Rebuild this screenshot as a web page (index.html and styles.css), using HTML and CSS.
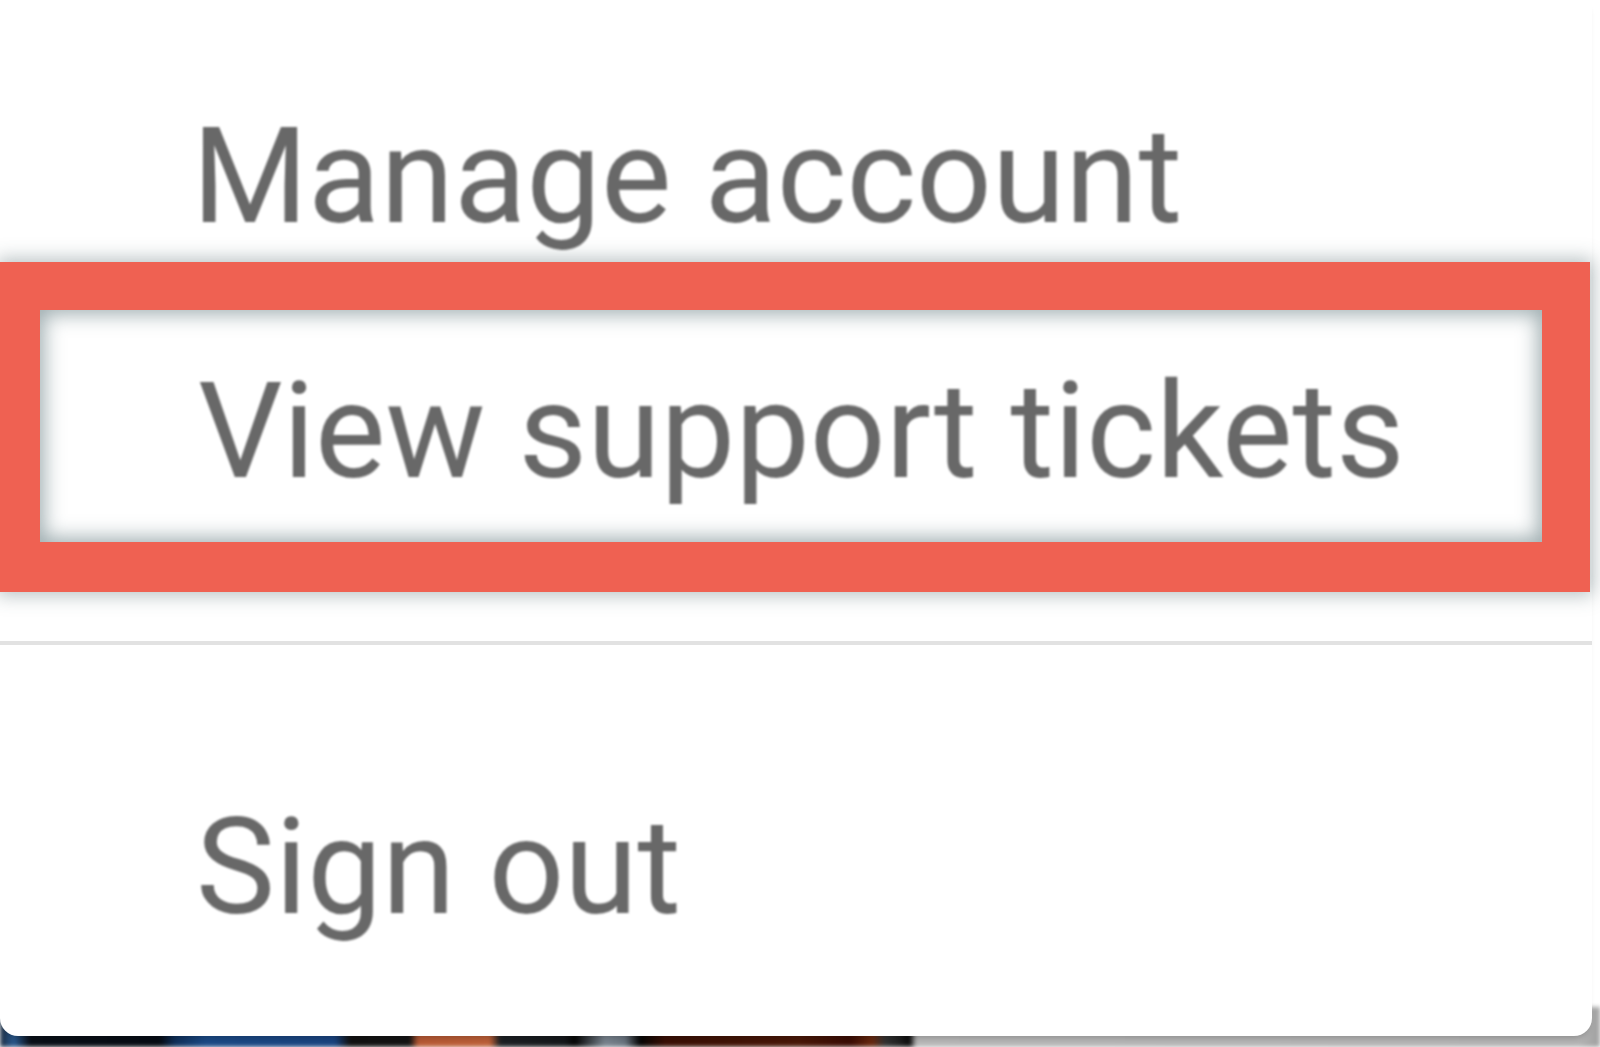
FILE: index.html
```html
<!DOCTYPE html>
<html lang="en">
<head>
<meta charset="utf-8">
<title>Account menu</title>
<link rel="stylesheet" href="styles.css">
</head>
<body>
<div class="screen">
  <div class="app">
    <div class="strip"></div>
  </div>
  <nav class="menu">
    <a class="item first">Manage account</a>
    <div class="focus-ring">
      <a class="item focused">View support tickets</a>
    </div>
    <hr class="sep">
    <a class="item last">Sign out</a>
  </nav>
</div>
</body>
</html>
```

FILE: styles.css
```css
* { box-sizing: border-box; }
html, body { margin: 0; padding: 0; background: #ffffff; }
.screen {
  position: relative;
  width: 1600px;
  height: 1047px;
  overflow: hidden;
  background: #ffffff;
  font-family: Roboto, "Liberation Sans", sans-serif;
}
.app {
  height: 1047px;
  display: flex;
  flex-direction: column;
  justify-content: flex-end;
}
.strip {
  height: 40px;
  filter: blur(2px);
  background: linear-gradient(to right,
    #1c2c40 0px, #2a5a90 14px, #0a1018 30px, #060c14 160px,
    #10305a 175px, #1b4a86 205px, #1a4480 335px, #121212 350px,
    #141414 410px, #b85a35 418px, #bd6038 490px, #1c2024 500px,
    #15181b 565px, #050505 575px, #7a8590 605px, #6a7580 625px,
    #050505 640px, #3a1005 665px, #4a1808 800px, #3a0c04 850px,
    #6a2a10 872px, #333333 885px, #202020 900px, #0a0a0a 910px,
    #b8b8b8 916px, #b4b4b4 1580px, #a0a0a0 1600px);
}
.menu {
  position: absolute;
  top: 0;
  left: 0;
  width: 1592px;
  height: 1036px;
  background: #ffffff;
  border-radius: 0 0 18px 18px;
  box-shadow: 0 6px 6px -4px rgba(0, 0, 0, 0.22);
  display: flex;
  flex-direction: column;
}
.item {
  display: block;
  font-size: 133px;
  line-height: 133px;
  color: #686868;
  text-decoration: none;
  white-space: nowrap;
  padding-left: 192px;
  filter: blur(1.2px);
}
.first { padding-top: 110px; }
.focus-ring {
  margin-top: 19px;
  margin-right: 2px;
  height: 330px;
  border-style: solid;
  border-color: #ef6152;
  border-width: 48px 48px 50px 40px;
  box-shadow: 0 0 18px 3px rgba(60, 85, 90, 0.38), inset 0 0 20px 4px rgba(60, 90, 95, 0.5);
}
.focused {
  padding-top: 55px;
  padding-left: 158px;
}
.sep {
  margin: 49px 0 0 0;
  height: 4px;
  border: 0;
  background: #e2e2e2;
}
.last { margin-top: 156px; padding-left: 196px; }
```
